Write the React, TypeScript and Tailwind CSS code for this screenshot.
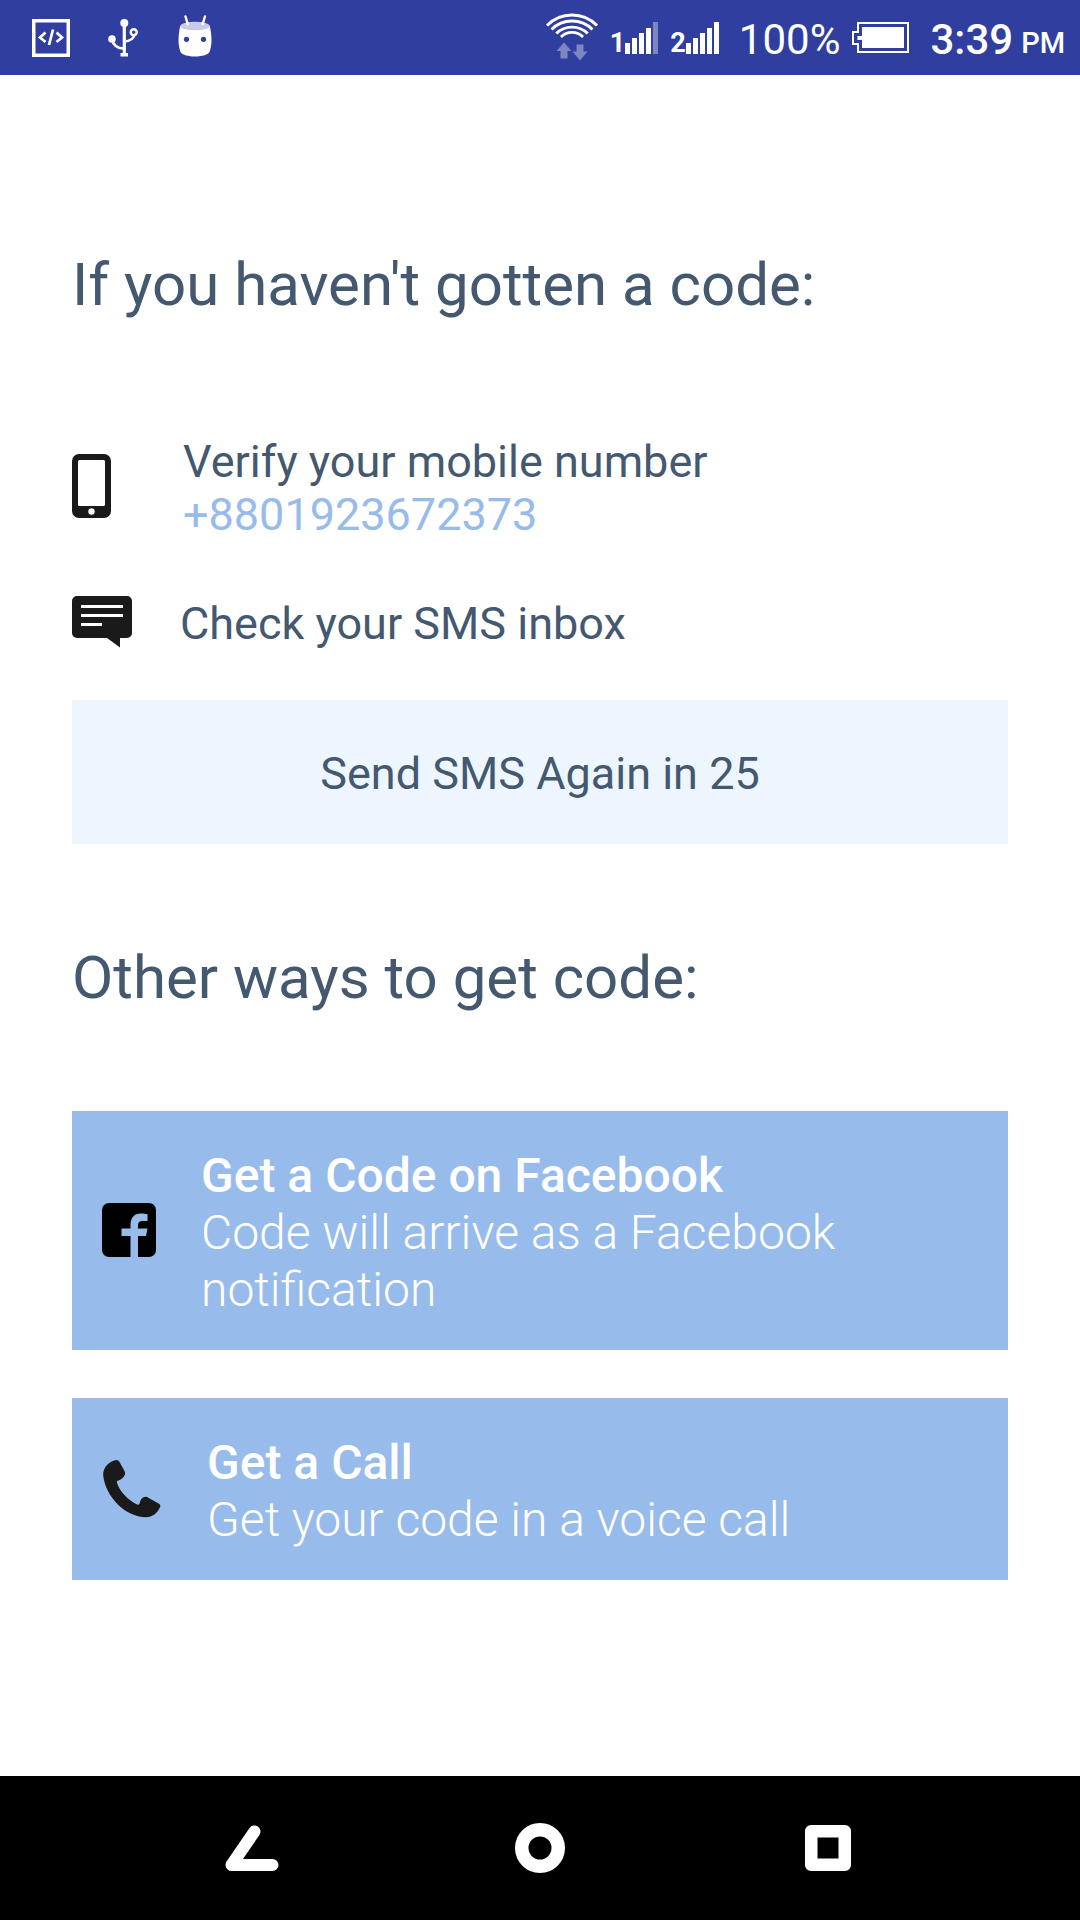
import type { ReactNode } from 'react';

function CodeIcon() {
  return (
    <svg width="38" height="38" viewBox="0 0 38 38" fill="none" stroke="#fff" aria-hidden="true">
      <rect x="1.75" y="1.75" width="34.5" height="34.5" strokeWidth="3.5" />
      <path d="M13.5 13.5 8 18.500l5.500 4.500M24.500 13.500 30 18.500l-5.500 4.500" strokeWidth="2.700" />
      <path d="M21 10.500 17 26" strokeWidth="2.700" />
    </svg>
  );
}

function UsbIcon() {
  return (
    <svg width="30" height="38" viewBox="0 0 30 38" fill="none" stroke="#fff" aria-hidden="true">
      <circle cx="16.300" cy="4" r="4" fill="#fff" stroke="none" />
      <rect x="12.500" y="34" width="7.500" height="3.500" fill="#fff" stroke="none" />
      <path d="M16.300 4v31" strokeWidth="3.200" />
      <circle cx="4" cy="20" r="3.800" fill="#fff" stroke="none" />
      <path d="M4 20c1 6 5.500 9.500 12.300 9.500" strokeWidth="2.500" />
      <circle cx="25.700" cy="13.300" r="3" strokeWidth="2.400" />
      <path d="M26.500 16c-1 4-4.500 6-10.200 6.500" strokeWidth="2.500" />
    </svg>
  );
}

function RobotIcon() {
  return (
    <svg width="34" height="42" viewBox="0 0 34 42" aria-hidden="true">
      <path d="M2.200 11C.3 20-.5 29 2.500 37c1.500 3 8.500 4.500 14.500 4.500s13-1.500 14.500-4.500c3-8 2.200-17 .3-26z" fill="#fff" />
      <ellipse cx="17" cy="11" rx="14.800" ry="4.300" fill="#c9cbe6" />
      <path d="M7.500 1.500 9.700 9M27 1.500 24.700 9" stroke="#fff" strokeWidth="2.400" strokeLinecap="round" />
      <circle cx="8.500" cy="24.300" r="2.600" fill="#303f9f" />
      <circle cx="25.500" cy="24.300" r="2.600" fill="#303f9f" />
    </svg>
  );
}

function WifiIcon() {
  return (
    <svg width="52" height="50" viewBox="0 0 52 50" fill="none" stroke="#fff" strokeWidth="2.900" aria-hidden="true">
      <path d="M1 14.500a35 35 0 0 1 50 0" />
      <path d="M5.500 18.500a29 29 0 0 1 41 0" />
      <path d="M10.300 22.500a22.500 22.500 0 0 1 31.400 0" />
      <path d="M15 26a15.500 15.500 0 0 1 22 0" />
      <path d="M18 31.500 25.500 40H21.500v7.500h-7V40h-4z" fill="#7d86c2" stroke="none" />
      <path d="M30.500 33.500h7v7h4L34 49.500 26.500 40.500h4z" fill="#7d86c2" stroke="none" />
    </svg>
  );
}

function Signal({ sim, full }: { sim: string; full: boolean }) {
  return (
    <span className="flex items-end" role="img" aria-label={`SIM ${sim} signal`}>
      <span className="-mb-[3px] text-[27px] leading-[28px] font-bold">{sim}</span>
      <svg width="33" height="32" viewBox="0 0 33 32" fill="#fff">
        <rect x="0" y="21" width="5" height="11" />
        <rect x="7" y="16" width="5" height="16" />
        <rect x="14" y="11" width="5" height="21" />
        <rect x="21" y="6" width="5" height="26" />
        <rect x="28" y="0" width="5" height="32" fill={full ? '#fff' : '#7d86c2'} />
      </svg>
    </span>
  );
}

function BatteryIcon() {
  return (
    <svg width="57" height="31" viewBox="0 0 57 31" aria-hidden="true">
      <path d="M6 1h50v29H6v-8H1V10h5z" fill="none" stroke="#fff" strokeWidth="2" />
      <path d="M10 5h42v21H10v-8H5.500v-4H10z" fill="#fff" />
    </svg>
  );
}

function MobileIcon() {
  return (
    <svg className="-mt-1 shrink-0" width="39" height="64" viewBox="0 0 39 64" aria-hidden="true">
      <rect width="39" height="64" rx="7" fill="#1a1a1a" />
      <rect x="6" y="6" width="27" height="46" rx="1.500" fill="#fff" />
      <circle cx="19.500" cy="57.500" r="3.200" fill="#fff" />
    </svg>
  );
}

function MessageIcon() {
  return (
    <svg className="-mt-1 shrink-0" width="60" height="52" viewBox="0 0 60 52" aria-hidden="true">
      <path d="M5 0h50a5 5 0 0 1 5 5v32a5 5 0 0 1-5 5h-7v9.500L35 42H5a5 5 0 0 1-5-5V5a5 5 0 0 1 5-5z" fill="#1a1a1a" />
      <path d="M9 10.500h42M9 19.500h42M9 28.500h21" stroke="#fff" strokeWidth="3" />
    </svg>
  );
}

function FacebookIcon() {
  return (
    <svg width="54" height="54" viewBox="0 0 54 54" aria-hidden="true">
      <rect width="54" height="54" rx="7" fill="#000" />
      <path d="M28.500 54V33h-9v-7.500h9V22c0-7 3.500-11.500 10-11.500 3 0 5 .2 7 .8V18h-4.500c-3.500 0-5 1.200-5 4.500v3h9.500L44 33h-8v21z" fill="#97bbeb" />
    </svg>
  );
}

function CallIcon() {
  return (
    <svg width="60" height="58" viewBox="-1 -1 60 58" overflow="visible" aria-hidden="true">
      <path d="M13.500 0C15 0 15.700.8 16.500 2l5 9c1 2 .8 3.500-.5 5.200-1.500 2-3 3.500-5.500 4.300-1.500.4-1.900 1-1.500 2.300C17 32 25 40 33.500 44.300c1.800.9 2.700.5 3.200-1.300 1-3.500 2.500-6 6-6.200 1 0 1.800.4 2.600.9L56 43.700c1.500.9 1.600 2 1 3.500-2.500 5.800-7.500 10-14 10C22 57 2.500 36.500.2 15.500-.2 8 4.500 3 10.500.7c1-.4 2-.7 3-.7z" fill="#1a1a1a" />
    </svg>
  );
}

function CodeOption({ icon, title, detail }: { icon: ReactNode; title: string; detail: string }) {
  return (
    <button type="button" className="flex w-full items-center gap-[45px] bg-[#97bbeb] pt-9 pr-8 pb-8 pl-[30px] text-left text-[48px] leading-[57px] text-white">
      <span className="shrink-0 pb-1.5">{icon}</span>
      <span className="flex-1">
        <span className="block font-medium">{title}</span>
        <span className="block font-light">{detail}</span>
      </span>
    </button>
  );
}

export default function App() {
  return (
    <div className="flex min-h-screen flex-col bg-white font-[Roboto,sans-serif] text-[#44586f]">
      <header className="flex h-[75px] items-center justify-between bg-[#303f9f] pr-[15px] pl-8 text-white">
        <div className="flex items-center gap-[38px]">
          <CodeIcon />
          <UsbIcon />
          <span className="pb-1 pl-0.5"><RobotIcon /></span>
        </div>
        <div className="flex items-center text-[42px] leading-[49px]">
          <span className="pb-1"><WifiIcon /></span>
          <span className="ml-3"><Signal sim="1" full={false} /></span>
          <span className="ml-3"><Signal sim="2" full /></span>
          <span className="ml-5 pt-1">100%</span>
          <span className="ml-3"><BatteryIcon /></span>
          <span className="ml-[21px] pt-1 font-medium">3:39</span>
          <span className="ml-2 pt-3 text-[29px] font-medium">PM</span>
        </div>
      </header>

      <main className="flex-1 px-[72px] pt-[175px] pb-16">
        <section>
          <h1 className="text-[60px] leading-[70px]">If you haven't gotten a code:</h1>
          <ul className="mt-[115px] text-[45px] leading-[53px]">
            <li className="flex items-center gap-[72px]">
              <MobileIcon />
              <div>
                <p>Verify your mobile number</p>
                <a href="tel:+8801923672373" className="block text-[#97bbeb]">+8801923672373</a>
              </div>
            </li>
            <li className="mt-14 flex items-center gap-12">
              <MessageIcon />
              <p>Check your SMS inbox</p>
            </li>
          </ul>
          <button type="button" className="mt-[50px] h-[144px] w-full bg-[#edf6ff] pt-0.5 text-[45px] leading-[53px]">
            Send SMS Again in 25
          </button>
        </section>

        <section className="mt-[99px]">
          <h2 className="text-[60px] leading-[70px]">Other ways to get code:</h2>
          <div className="mt-[98px] flex flex-col gap-12">
            <CodeOption
              icon={<FacebookIcon />}
              title="Get a Code on Facebook"
              detail="Code will arrive as a Facebook notification"
            />
            <CodeOption icon={<CallIcon />} title="Get a Call" detail="Get your code in a voice call" />
          </div>
        </section>
      </main>

      <nav className="flex h-36 justify-center bg-black">
        <button type="button" aria-label="Back" className="flex w-72 items-center justify-center">
          <svg width="54" height="46" viewBox="0 0 54 46" fill="none" stroke="#fff" strokeWidth="12" strokeLinecap="round" strokeLinejoin="round">
            <path d="M29.500 6.500 6.500 40H47.500" />
          </svg>
        </button>
        <button type="button" aria-label="Home" className="flex w-72 items-center justify-center">
          <svg width="50" height="50" viewBox="0 0 50 50" fill="none" stroke="#fff">
            <circle cx="25" cy="25" r="18.250" strokeWidth="13.500" />
          </svg>
        </button>
        <button type="button" aria-label="Recent apps" className="flex w-72 items-center justify-center">
          <svg width="46" height="46" viewBox="0 0 46 46">
            <path fillRule="evenodd" fill="#fff" d="M6 0h34a6 6 0 0 1 6 6v34a6 6 0 0 1-6 6H6a6 6 0 0 1-6-6V6a6 6 0 0 1 6-6zM12.500 12.500v21h21v-21z" />
          </svg>
        </button>
      </nav>
    </div>
  );
}
